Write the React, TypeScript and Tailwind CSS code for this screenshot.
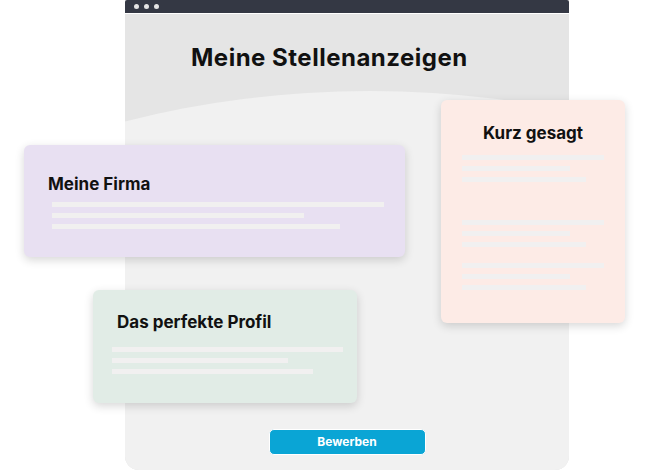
import React from 'react';

const font = { fontFamily: '"Inter", "DejaVu Sans", sans-serif' };

function Lines({ widths, className = '' }: { widths: number[]; className?: string }) {
  return (
    <div className={`flex flex-col gap-[6px] ${className}`}>
      {widths.map((w, i) => (
        <div key={i} className="h-[5px] bg-[#f1f0f0]" style={{ width: w }} />
      ))}
    </div>
  );
}

export default function App() {
  return (
    <div
      className="relative w-[650px] h-[471px] bg-white overflow-hidden text-[#111]"
      style={font}
    >
      {/* browser window */}
      <div className="ml-[125px] w-[444px] h-[470px] flex flex-col rounded-b-[14px] overflow-hidden bg-[#f1f1f1]">
        <div className="h-[13px] shrink-0 bg-[#343844] rounded-t-[2px] flex items-center gap-[5px] pl-[9px]">
          <span className="w-[5px] h-[5px] rounded-full bg-[#e4e4e4]" />
          <span className="w-[5px] h-[5px] rounded-full bg-[#e4e4e4]" />
          <span className="w-[5px] h-[5px] rounded-full bg-[#e4e4e4]" />
        </div>
        <div className="h-[1px] shrink-0 bg-white" />
        <div className="relative flex-1 flex flex-col bg-[#e5e5e5] overflow-hidden">
          <div className="absolute left-[-395px] top-[77px] w-[1280px] h-[800px] rounded-[50%] bg-[#f1f1f1]" />
          <h1 className="relative pt-[28px] pl-[66px] text-[24px] leading-[32px] font-bold tracking-[0.5px]">
            Meine Stellenanzeigen
          </h1>
          <div className="relative mt-auto pb-[15px] flex justify-center">
            <button className="w-[157px] h-[26px] rounded-[5px] bg-[#0aa5d5] border border-white text-white text-[12px] font-bold">
              Bewerben
            </button>
          </div>
        </div>
      </div>

      {/* Meine Firma */}
      <div className="absolute left-[24px] top-[145px] w-[381px] h-[112px] rounded-[6px] bg-[#e8e0f2] shadow-[0_3px_10px_rgba(0,0,0,0.16)] pt-[28px]">
        <div className="pl-[24px] text-[17px] leading-[22px] font-bold">Meine Firma</div>
        <Lines widths={[332, 252, 288]} className="ml-[28px] mt-[7px]" />
      </div>

      {/* Kurz gesagt */}
      <div className="absolute left-[441px] top-[100px] w-[184px] h-[223px] rounded-[6px] bg-[#fdebe6] shadow-[0_3px_10px_rgba(0,0,0,0.16)] pt-[22px]">
        <div className="text-center text-[17px] leading-[22px] font-bold">Kurz gesagt</div>
        <div className="pl-[21px] mt-[11px] flex flex-col">
          <Lines widths={[142, 108, 124]} />
          <Lines widths={[142, 108, 124]} className="mt-[38px]" />
          <Lines widths={[142, 108, 124]} className="mt-[16px]" />
        </div>
      </div>

      {/* Das perfekte Profil */}
      <div className="absolute left-[93px] top-[290px] w-[264px] h-[113px] rounded-[6px] bg-[#e1ece6] shadow-[0_3px_10px_rgba(0,0,0,0.16)] pt-[21px]">
        <div className="pl-[24px] text-[17px] leading-[22px] font-bold">Das perfekte Profil</div>
        <Lines widths={[231, 176, 201]} className="ml-[19px] mt-[14px]" />
      </div>
    </div>
  );
}
